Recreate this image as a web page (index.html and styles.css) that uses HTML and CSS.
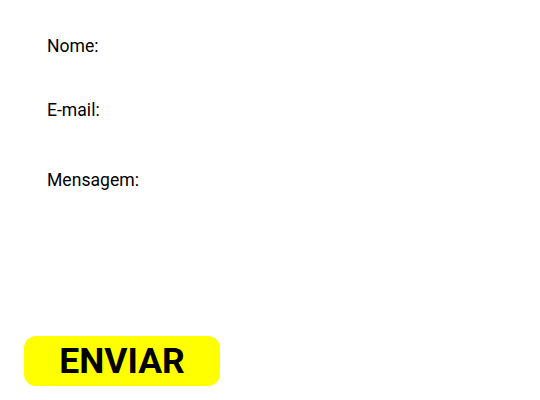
FILE: index.html
```html
<!DOCTYPE html>
<html lang="pt">
<head>
<meta charset="utf-8">
<link rel="stylesheet" href="styles.css">
</head>
<body>
<form class="form">
  <div class="field field-nome"><label class="label">Nome:</label></div>
  <div class="field field-email"><label class="label">E-mail:</label></div>
  <div class="field field-msg"><label class="label">Mensagem:</label></div>
  <button type="button" class="btn">ENVIAR</button>
</form>
</body>
</html>
```

FILE: styles.css
```css
html, body {
  margin: 0;
  background: #fff;
}
body {
  font-family: Roboto, "Liberation Sans", sans-serif;
  color: #000;
}
.form {
  display: flex;
  flex-direction: column;
  align-items: flex-start;
  padding: 36px 0 0 24px;
}
.label {
  display: block;
  margin-left: 23px;
  font-size: 17.6px;
  line-height: 20px;
}
.field-email { margin-top: 44px; }
.field-msg { margin-top: 50px; }
.btn {
  margin-top: 146px;
  width: 196px;
  height: 50px;
  border: none;
  border-radius: 12px;
  background: #ffff00;
  color: #000;
  font-family: Roboto, "Liberation Sans", sans-serif;
  font-weight: 700;
  font-size: 35.5px;
  line-height: 50px;
  padding: 0;
  text-align: center;
}
```
